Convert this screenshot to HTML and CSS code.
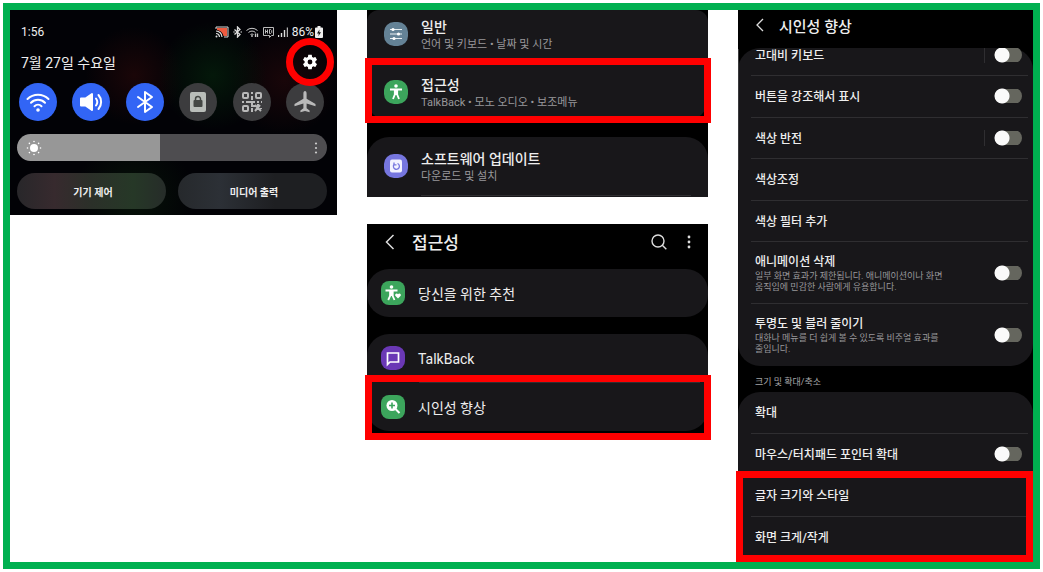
FILE: index.html
```html
<!DOCTYPE html>
<html lang="ko">
<head>
  <meta charset="utf-8">
  <meta name="viewport" content="width=device-width, initial-scale=1">
  <title>글자 크기와 스타일 설정</title>
  <link rel="stylesheet" href="styles.css">
</head>
<body>
<main class="frame">

  <!-- 빠른 설정 -->
  <section class="panel quick">
    <div class="status">
      <span>1:56</span>
      <div class="statusIcons">
        <svg width="14" height="12" viewBox="0 0 14 12"><path d="M2 2h10v8H8.500C8 7 5.500 4.500 2 4z" fill="#ee5b3f"/><path d="M1 3V1h12v10H9" fill="none" stroke="#ddd"/><path d="M1 5a6 6 0 0 1 6 6M1 7.500a3.500 3.500 0 0 1 3.500 3.500" fill="none" stroke="#ddd" stroke-width="1.200"/><circle cx="1.500" cy="10.500" r="1" fill="#ddd"/></svg>
        <svg width="9" height="12" viewBox="0 0 9 12"><path d="M1.500 3.500l5.500 5-2.500 2.500v-10L7 3.500l-5.500 5" fill="none" stroke="#ddd" stroke-width="1.300"/><circle cx="1" cy="6" r=".7" fill="#ddd"/><circle cx="8.200" cy="6" r=".7" fill="#ddd"/></svg>
        <svg width="13" height="12" viewBox="0 0 13 12" fill="none" stroke="#ccc"><path d="M.5 4.500a8 8 0 0 1 11 0M2.500 6.500a5 5 0 0 1 7 0M4.500 8.500a2.500 2.500 0 0 1 3 0"/><circle cx="6" cy="10" r=".6"/><path d="M9.500 11V7.500M11.500 7.500V11" stroke-width="1.300"/></svg>
        <svg width="11" height="12" viewBox="0 0 11 12" fill="none" stroke="#bbb"><path d="M4.500 9.500h-4v-8h10v8h-2l-2 2v-2z"/><path d="M2.500 3.500v4M4.500 3.500v4M2.500 5.500h2M6.500 3.500v4h1.200l1-1v-2l-1-1z"/></svg>
        <svg width="10" height="12" viewBox="0 0 10 12"><path d="M.5 11V9M3.500 11V7M6.500 11V4" stroke="#ddd" stroke-width="1.400"/><path d="M9.300 11V1.500" stroke="#ddd"/></svg>
        <span>86%</span>
        <svg width="8" height="12" viewBox="0 0 8 12"><path d="M2.500 0h3v1.500H7A1 1 0 0 1 8 2.500V11a1 1 0 0 1-1 1H1a1 1 0 0 1-1-1V2.500a1 1 0 0 1 1-1h1.500z" fill="#eee"/><path d="M4.500 3.500L2 7.500h1.800l-.5 2.700L6 6.300H4.200z" fill="#111"/></svg>
      </div>
    </div>

    <div class="date">
      <span>7월 27일 수요일</span>
      <button type="button" class="gear" aria-label="설정">
        <svg width="18" height="18" viewBox="0 0 24 24" fill="#fff"><path d="M19.140 12.940c.04-.3.06-.61.06-.94s-.02-.64-.07-.94l2.030-1.580c.18-.14.23-.41.12-.61l-1.920-3.320c-.12-.22-.37-.29-.59-.22l-2.390.96c-.5-.38-1.030-.7-1.620-.94l-.36-2.540c-.04-.24-.24-.41-.48-.41h-3.840c-.24 0-.43.17-.47.41l-.36 2.540c-.59.24-1.130.57-1.620.94l-2.390-.96c-.22-.08-.47 0-.59.22L2.740 8.870c-.12.21-.08.47.12.61l2.030 1.580c-.05.3-.09.63-.09.94s.02.64.07.94l-2.030 1.580c-.18.14-.23.41-.12.61l1.920 3.320c.12.22.37.29.59.22l2.390-.96c.5.38 1.030.7 1.620.94l.36 2.540c.05.24.24.41.48.41h3.840c.24 0 .44-.17.47-.41l.36-2.540c.59-.24 1.130-.56 1.620-.94l2.390.96c.22.08.47 0 .59-.22l1.920-3.320c.12-.22.07-.47-.12-.61zM12 15.200a3.200 3.200 0 1 1 0-6.400 3.200 3.200 0 0 1 0 6.400z"/></svg>
      </button>
    </div>

    <div class="toggles">
      <button type="button" class="round on" aria-label="Wi-Fi">
        <svg width="26" height="26" viewBox="0 0 26 26" fill="none" stroke="#fff" stroke-width="2" stroke-linecap="round"><path d="M2.500 10a15 15 0 0 1 21 0M6 13.700a10 10 0 0 1 14 0M9.500 17.200a5 5 0 0 1 7 0"/><circle cx="13" cy="21" r=".8" fill="#fff"/></svg>
      </button>
      <button type="button" class="round on" aria-label="소리">
        <svg width="26" height="26" viewBox="0 0 26 26" fill="none" stroke="#fff" stroke-width="2" stroke-linecap="round"><path d="M3 9.500h4.500L14 5v16l-6.500-4.500H3z" fill="#fff" stroke-linejoin="round"/><path d="M18 9.500c1.500 2 1.500 5 0 7M20.500 6c3.500 4 3.500 10 0 14"/></svg>
      </button>
      <button type="button" class="round on" aria-label="블루투스">
        <svg width="26" height="26" viewBox="0 0 26 26" fill="none" stroke="#fff" stroke-width="2" stroke-linejoin="round" stroke-linecap="round"><path d="M6 8l14 10-7 5V3l7 5L6 18"/></svg>
      </button>
      <button type="button" class="round" aria-label="자동 회전 잠금">
        <svg width="26" height="26" viewBox="0 0 26 26"><rect x="5" y="3" width="16" height="20" rx="2" fill="#b9bdb9"/><rect x="8.500" y="11" width="9" height="7" rx="1" fill="#444744"/><path d="M10.500 12V10a2.500 2.500 0 0 1 5 0v2" fill="none" stroke="#444744" stroke-width="1.500"/></svg>
      </button>
      <button type="button" class="round" aria-label="QR 스캔">
        <svg width="26" height="26" viewBox="0 0 26 26" fill="none" stroke="#b9b9b9" stroke-width="2"><rect x="4" y="4" width="5" height="5" rx="1"/><rect x="17" y="4" width="5" height="5" rx="1"/><rect x="4" y="17" width="5" height="5" rx="1"/><path d="M13 3v2M13 7v4M3 13h2M7 13h9M18 13h2M22 13h1M13 14v3h3M13 19v4M16 16l6 6M21 16l-5 6M19 15v3M22 19v1"/></svg>
      </button>
      <button type="button" class="round" aria-label="비행기 탑승 모드">
        <svg width="26" height="26" viewBox="0 0 26 26"><path d="M13 2c1 0 1.600 1 1.600 2.500v5.300L23.500 15v2.200l-8.900-2.700v4.800l3 2.200v1.800L13 22l-4.600 1.300v-1.800l3-2.200v-4.800l-8.900 2.700V15l8.900-5.200V4.500C11.400 3 12 2 13 2z" fill="#b9b9b9"/></svg>
      </button>
    </div>

    <div class="brightness">
      <input type="range" min="0" max="100" value="46" aria-label="밝기">
      <svg class="sun" width="16" height="16" viewBox="0 0 16 16" fill="#fff"><circle cx="8" cy="8" r="4"/><circle cx="8" cy="1.500" r=".8"/><circle cx="8" cy="14.500" r=".8"/><circle cx="1.500" cy="8" r=".8"/><circle cx="14.500" cy="8" r=".8"/><circle cx="3.400" cy="3.400" r=".8"/><circle cx="12.600" cy="3.400" r=".8"/><circle cx="3.400" cy="12.600" r=".8"/><circle cx="12.600" cy="12.600" r=".8"/></svg>
      <svg class="more" width="4" height="14" viewBox="0 0 4 14" fill="#ccc"><circle cx="2" cy="2.500" r="1.100"/><circle cx="2" cy="7" r="1.100"/><circle cx="2" cy="11.500" r="1.100"/></svg>
    </div>

    <div class="pills">
      <button type="button" class="pill device">기기 제어</button>
      <button type="button" class="pill media">미디어 출력</button>
    </div>
  </section>

  <div class="middle">
    <!-- 설정 -->
    <section class="panel settings">
      <div class="card cut">
        <a href="#" class="row item">
          <svg class="icon" viewBox="0 0 24 24"><rect width="24" height="24" rx="10" fill="#648296"/><path d="M6 7.500h12M6 12h12M6 16.500h12" stroke="#e8eef2" stroke-width="1.200"/><g fill="#fff"><circle cx="9" cy="7.500" r="1.600"/><circle cx="14.500" cy="12" r="1.600"/><circle cx="10" cy="16.500" r="1.600"/></g></svg>
          <span class="texts"><span class="name">일반</span><span class="sub">언어 및 키보드 • 날짜 및 시간</span></span>
        </a>
        <a href="#" class="row item marked">
          <svg class="icon" viewBox="0 0 24 24"><rect width="24" height="24" rx="10" fill="#3ca55c"/><circle cx="12" cy="6" r="1.800" fill="#fff"/><path d="M6 9.500h12M10.800 10v4.500L9 19M13.200 10v4.500L15 19" fill="none" stroke="#fff" stroke-width="1.800"/><path d="M10 9h4v6h-4z" fill="#fff"/></svg>
          <span class="texts"><span class="name">접근성</span><span class="sub">TalkBack • 모노 오디오 • 보조메뉴</span></span>
        </a>
      </div>
      <div class="card open">
        <a href="#" class="row item">
          <svg class="icon" viewBox="0 0 24 24"><rect width="24" height="24" rx="10" fill="#7676df"/><rect x="6" y="5.500" width="12" height="13" rx="2" fill="#f2f2ff"/><path d="M10 10.500a3 3 0 1 0 3.500-1M10 8.500v2.300h2.500" fill="none" stroke="#7676df" stroke-width="1.300"/></svg>
          <span class="texts"><span class="name">소프트웨어 업데이트</span><span class="sub">다운로드 및 설치</span></span>
        </a>
      </div>
    </section>

    <!-- 접근성 -->
    <section class="panel access">
      <header class="bar">
        <button type="button" class="tool" aria-label="뒤로"><svg width="10" height="16" viewBox="0 0 10 16" fill="none" stroke="#ddd" stroke-width="1.500"><path d="M8.500 1L1.500 8l7 7"/></svg></button>
        <h2>접근성</h2>
        <button type="button" class="tool" aria-label="검색"><svg width="16" height="16" viewBox="0 0 16 16" fill="none" stroke="#ddd" stroke-width="1.400"><circle cx="7" cy="7" r="6"/><path d="M11.300 11.300l4 4"/></svg></button>
        <button type="button" class="tool" aria-label="더보기"><svg width="4" height="16" viewBox="0 0 4 16" fill="#ddd"><circle cx="2" cy="3" r="1.400"/><circle cx="2" cy="8" r="1.400"/><circle cx="2" cy="13" r="1.400"/></svg></button>
      </header>
      <div class="card">
        <a href="#" class="row menu">
          <svg class="icon" viewBox="0 0 24 24"><rect width="24" height="24" rx="8" fill="#3ca55c"/><circle cx="10.500" cy="6" r="1.800" fill="#fff"/><path d="M4.500 9.500h12M9.300 10v4.500L7.200 19M11.500 10v4.500l2 4.500" fill="none" stroke="#fff" stroke-width="1.800"/><path d="M8.400 9h4v6h-4z" fill="#fff"/><path d="M17 17.500l-2.700-2.700a1.500 1.500 0 0 1 2.700-1.500 1.500 1.500 0 0 1 2.700 1.500z" fill="#fff"/></svg>
          <span class="name">당신을 위한 추천</span>
        </a>
      </div>
      <div class="card">
        <a href="#" class="row menu">
          <svg class="icon" viewBox="0 0 24 24"><rect width="24" height="24" rx="9" fill="#6a38b5"/><path d="M6.500 7h11v9h-8.500l-2.500 2.500z" fill="none" stroke="#fff" stroke-width="1.700"/></svg>
          <span class="name">TalkBack</span>
        </a>
        <a href="#" class="row menu marked">
          <svg class="icon" viewBox="0 0 24 24"><rect width="24" height="24" rx="8" fill="#3ca55c"/><circle cx="11" cy="10.500" r="5.500" fill="#fff"/><path d="M14.500 14l4 4" stroke="#fff" stroke-width="2"/><path d="M11 7.500v6M8 10.500h6" stroke="#3ca55c" stroke-width="1.600"/></svg>
          <span class="name">시인성 향상</span>
        </a>
      </div>
    </section>
  </div>

  <!-- 시인성 향상 -->
  <section class="panel vision">
    <header class="bar">
      <button type="button" class="tool" aria-label="뒤로"><svg width="8" height="14" viewBox="0 0 8 14" fill="none" stroke="#ddd" stroke-width="1.300"><path d="M7 1L1 7l6 6"/></svg></button>
      <h2>시인성 향상</h2>
    </header>
    <div class="card scrolled">
      <label class="row first split"><span class="name">고대비 키보드</span><input type="checkbox" class="switch"></label>
      <label class="row"><span class="name">버튼을 강조해서 표시</span><input type="checkbox" class="switch"></label>
      <label class="row split"><span class="name">색상 반전</span><input type="checkbox" class="switch"></label>
      <a href="#" class="row"><span class="name">색상조정</span></a>
      <a href="#" class="row"><span class="name">색상 필터 추가</span></a>
      <label class="row tall"><span class="texts"><span class="name">애니메이션 삭제</span><span class="sub">일부 화면 효과가 제한됩니다. 애니메이션이나 화면<br>움직임에 민감한 사람에게 유용합니다.</span></span><input type="checkbox" class="switch"></label>
      <label class="row tall"><span class="texts"><span class="name">투명도 및 블러 줄이기</span><span class="sub">대화나 메뉴를 더 쉽게 볼 수 있도록 비주얼 효과를<br>줄입니다.</span></span><input type="checkbox" class="switch"></label>
    </div>
    <h3>크기 및 확대/축소</h3>
    <div class="card open">
      <a href="#" class="row"><span class="name">확대</span></a>
      <label class="row"><span class="name">마우스/터치패드 포인터 확대</span><input type="checkbox" class="switch"></label>
      <div class="group marked">
        <a href="#" class="row"><span class="name">글자 크기와 스타일</span></a>
        <a href="#" class="row"><span class="name">화면 크게/작게</span></a>
      </div>
    </div>
  </section>

</main>
</body>
</html>
```
FILE: styles.css
```css
* { margin: 0; padding: 0; box-sizing: border-box; }
body { padding: 3px; background: #fff; color: #eee; font-family: Roboto, "Noto Sans CJK KR", sans-serif; font-size: 14px; }
a { color: inherit; text-decoration: none; }
button { border: 0; background: none; color: inherit; font-family: inherit; cursor: pointer; }
svg { display: block; flex: none; }

.frame { display: grid; grid-template-columns: 327fr 341fr 295fr; gap: 30px; align-items: start; min-height: calc(100vh - 6px); border: 7px solid #00b050; }
.panel { background: #000; }
.middle { display: flex; flex-direction: column; gap: 27px; }

/* red frames */
.marked { position: relative; }
.marked::before { content: ""; position: absolute; z-index: 1; border: 7px solid #f00; pointer-events: none; }
.settings .marked::before { inset: -5px -3px -2px -2px; }
.access .marked::before { inset: -7px -3px -9px -2px; }
.vision .marked::before { inset: -4px 0 -4px -2px; }

/* quick settings */
.quick { padding: 12px 10px 6px 7px; background: radial-gradient(circle at 62% 32%, #04180a, transparent 22%), radial-gradient(circle at 38% 32%, #1a0608, transparent 20%), radial-gradient(circle at 84% 34%, #190609, transparent 18%), radial-gradient(circle at 38% 92%, #061208, transparent 22%), #020206; }
.status { display: flex; justify-content: space-between; align-items: center; height: 20px; padding: 0 4px; font-size: 12px; }
.statusIcons { display: flex; align-items: center; gap: 4px; }
.statusIcons span { margin-right: -3px; }
.date { display: flex; justify-content: space-between; align-items: center; height: 40px; padding: 0 8px 0 4px; }
.gear { position: relative; }
.gear::before { content: ""; position: absolute; inset: -15px; border: 7px solid #f00; border-radius: 50%; }
.toggles { display: flex; justify-content: space-between; padding: 1px 3px 13px 2px; }
.round { display: flex; align-items: center; justify-content: center; width: 38px; height: 38px; border-radius: 50%; background: #3c3c3e; }
.round.on { background: #3265f5; }
.brightness { position: relative; height: 27px; margin-bottom: 12px; }
.brightness input { display: block; width: 100%; height: 27px; border-radius: 14px; background: linear-gradient(to right, #979797 46%, #4e4d50 46%); appearance: none; }
.brightness input::-webkit-slider-thumb { appearance: none; width: 1px; height: 27px; }
.sun { position: absolute; left: 9px; top: 6px; }
.more { position: absolute; right: 9px; top: 7px; }
.pills { display: flex; gap: 12px; }
.pill { flex: 1; height: 36px; padding-left: 3px; border-radius: 18px; font-size: 10px; font-weight: 700; background: #1f2023; }
.device { background: linear-gradient(to right, #28272a, #372a2e 25%, #2b3029 50%, #263827 78%, #262c29); }
.media { background: linear-gradient(to right, #26292c, #2c3036 28%, #1e1f22 65%); }

/* lists */
.card { display: flex; flex-direction: column; border-radius: 22px; background: #18171a; }
.row { display: flex; align-items: center; }
.icon { width: 24px; height: 24px; }
.texts { display: flex; flex-direction: column; }
.name { font-size: 14px; line-height: 18px; }
.sub { font-size: 11px; line-height: 18px; color: #98989a; }
.bar { display: flex; align-items: center; }
.bar h2 { flex: 1; font-weight: 500; }
.tool { display: flex; }
.open { border-radius: 22px 22px 0 0; }

.settings .item { height: 58px; padding-left: 17px; gap: 13px; }
.settings .name { font-weight: 500; }
.settings .texts { padding-top: 4px; }
.settings .cut { margin-bottom: 16px; border-radius: 12px 12px 22px 22px; }
.settings .cut .item:first-child { height: 53px; padding-bottom: 5px; }
.settings .open::after { content: ""; height: 1px; margin: 0 17px 1px 54px; background: #2f2e31; }

.access { padding-bottom: 2px; }
.access .bar { height: 45px; padding: 0 17px 10px 18px; gap: 17px; }
.access .bar h2 { font-size: 17px; }
.access .bar .tool + .tool { margin-left: 3px; }
.access .card + .card { margin-top: 17px; }
.menu { height: 48px; padding-left: 14px; gap: 13px; }
.access .name { padding-top: 2px; }
.access .marked { height: 49px; }
.access .marked::after { content: ""; position: absolute; top: 0; left: 52px; right: 8px; height: 1px; background: #2f2e31; }
.access .marked::before { inset: -7px -3px -9px -2px; }

/* visibility settings */
.vision { display: flex; flex-direction: column; align-self: stretch; padding-bottom: 4px; }
.vision .bar { height: 38px; padding: 0 18px 8px; gap: 15px; }
.vision .bar h2 { font-size: 15px; }
.vision .card { flex: 4 0 auto; }
.vision .row { flex: 1 0 41px; justify-content: space-between; margin-left: 13px; margin-right: 5px; padding: 0 6px 0 4px; border-bottom: 1px solid #2f2e31; }
.vision .name { padding-top: 2px; font-size: 12px; font-weight: 500; }
.vision .sub { font-size: 9px; line-height: 11px; }
.vision .first { flex: none; height: 28px; padding-bottom: 14px; overflow: hidden; }
.vision .tall { flex: none; height: 62px; }
.vision .tall .name { padding-top: 0; }
.vision .row:last-child { border-bottom: 0; }
.vision h3 { height: 26px; padding: 7px 17px 0; font-size: 9px; font-weight: 400; line-height: 18px; color: #a5a5a7; }
.group { display: flex; flex: 2 0 auto; flex-direction: column; }
.split .name { flex: 1; }
.split::after { content: ""; order: 1; width: 1px; height: 16px; margin-right: 9px; background: #2f2e31; }
.switch { order: 2; flex: none; width: 28px; height: 16px; appearance: none; background: radial-gradient(circle at 8px 8px, #fafafa 7px, transparent 8px), linear-gradient(#65665e, #65665e) right center / 20px 14px no-repeat; border-radius: 8px; cursor: pointer; }
.switch:checked { background: radial-gradient(circle at 19px 8px, #fafafa 7px, transparent 8px), linear-gradient(#3265f5, #3265f5) left center / 20px 14px no-repeat; }

/* thin edge mark beside the scrolled list */
.scrolled { position: relative; }
.scrolled::before { content: ""; position: absolute; left: 0; top: 1px; width: 1px; height: 38%; background: #3a3a3c; }
```
